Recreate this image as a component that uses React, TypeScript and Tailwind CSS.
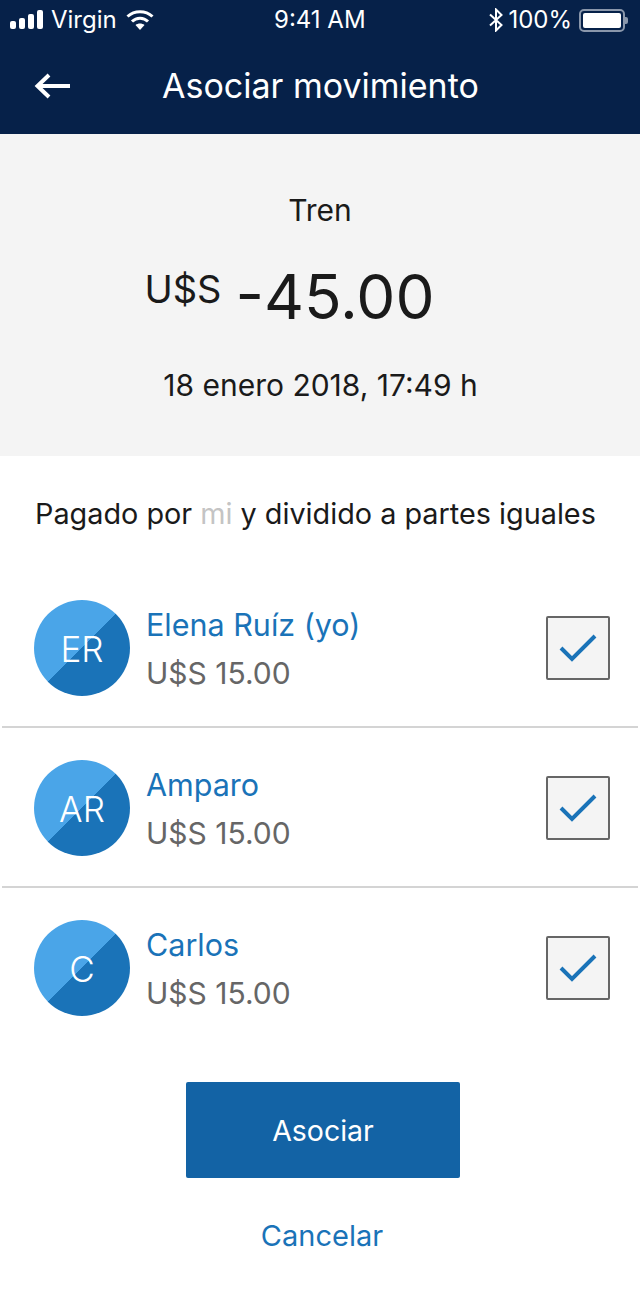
const people = [
  { initials: "ER", name: "Elena Ruíz (yo)" },
  { initials: "AR", name: "Amparo" },
  { initials: "C", name: "Carlos" },
];

function PersonRow({ initials, name, last }: { initials: string; name: string; last: boolean }) {
  return (
    <div className={`mx-[2px] h-[160px] flex items-center pl-[32px] pr-[28px] border-b-2 ${last ? "border-transparent" : "border-[#d4d4d4]"}`}>
      <div className="w-[96px] h-[96px] shrink-0 rounded-full bg-[linear-gradient(135deg,#4aa5e8_50%,#1a73b8_50%)] flex items-center justify-center mt-[2px]">
        <span className="text-white text-[35px] font-light mt-[3px]">{initials}</span>
      </div>
      <div className="ml-[17px] flex-1 flex flex-col mt-[4px]">
        <span className="text-[30.5px] leading-[48px] text-[#1a73b8] ml-[-1px]">{name}</span>
        <span className="text-[30px] leading-[48px] text-[#666666] ml-[-1px]">U$S 15.00</span>
      </div>
      <div className="w-[64px] h-[64px] border-2 border-[#666666] rounded-[2px] bg-[#f4f4f4] flex items-center justify-center mt-[2px]">
        <svg width="38" height="30" viewBox="0 0 38 30" fill="none">
          <path d="M2 15 L13 26 L36 3" stroke="#1a73b8" strokeWidth="4" />
        </svg>
      </div>
    </div>
  );
}

export default function App() {
  return (
    <div className="w-[640px] h-[1292px] bg-white font-['Inter',sans-serif] overflow-hidden">
      <div className="h-[134px] bg-[#062149] text-white flex flex-col">
        <div className="h-[40px] flex items-center pl-[10px] pr-[10px] text-[24px] relative">
          <div className="flex items-end gap-[3px] h-[20px]">
            <div className="w-[6px] h-[8px] bg-white rounded-[2px] mb-[1px]" />
            <div className="w-[6px] h-[11px] bg-white rounded-[2px] mb-[1px]" />
            <div className="w-[6px] h-[15px] bg-white rounded-[2px] mb-[1px]" />
            <div className="w-[6px] h-[19px] bg-white rounded-[2px] mb-[1px]" />
          </div>
          <span className="ml-[8px]">Virgin</span>
          <svg className="ml-[9px]" width="28" height="22" viewBox="0 0 28 22" fill="none" stroke="#fff" strokeWidth="3">
            <path d="M1.5 7.5 C8.5 1 19.5 1 26.5 7.5" />
            <path d="M6 12.5 C10.5 8 17.5 8 22 12.5" />
            <path d="M14 21 L9.5 16 C12 14 16 14 18.5 16 Z" fill="#fff" stroke="none" />
          </svg>
          <span className="absolute left-[274px]">9:41 AM</span>
          <div className="ml-auto flex items-center">
            <svg width="14" height="24" viewBox="0 0 14 24" fill="none" stroke="#fff" strokeWidth="2">
              <path d="M1 6.5 L12.5 17 L7 22.5 V1.5 L12.5 7 L1 17.5" />
            </svg>
            <span className="ml-[5px]">100%</span>
            <div className="ml-[7px] w-[46px] h-[23px] border-2 border-[#8a97ab] rounded-[5px] p-[2px]">
              <div className="w-full h-full bg-white rounded-[2px]" />
            </div>
            <div className="w-[3px] h-[7px] bg-[#8a97ab] rounded-r-[2px] mr-[2px]" />
          </div>
        </div>
        <div className="flex-1 flex items-center pl-[34px] pb-[3px]">
          <svg width="36" height="26" viewBox="0 0 36 26" fill="none" stroke="#fff" strokeWidth="4">
            <path d="M36 13 H4" />
            <path d="M15 2 L3.5 13 L15 24" />
          </svg>
          <span className="ml-[92px] text-[34px]">Asociar movimiento</span>
        </div>
      </div>

      <div className="h-[322px] bg-[#f4f4f4] text-[#1a1a1a] flex flex-col items-center">
        <span className="mt-[56px] text-[30px] leading-[40px]">Tren</span>
        <div className="mt-[28px] h-[78px] flex items-start pr-[61px]">
          <span className="text-[38px] leading-[44px] mt-[9px]">U$S</span>
          <span className="ml-[14px] text-[62px] leading-[78px]">-45.00</span>
        </div>
        <span className="mt-[29px] ml-[1px] text-[30px] leading-[40px]">18 enero 2018, 17:49 h</span>
      </div>

      <p className="mt-[38px] pl-[35px] text-[28.8px] leading-[40px] text-[#1a1a1a]">
        Pagado por <span className="text-[#c4c4c4]">mi</span> y dividido a partes iguales
      </p>

      <div className="mt-[34px]">
        {people.map((p, i) => (
          <PersonRow key={p.name} initials={p.initials} name={p.name} last={i === people.length - 1} />
        ))}
      </div>

      <div className="mt-[-2px] flex flex-col items-center">
        <div className="mt-[36px] ml-[6px] w-[274px] h-[96px] bg-[#1363a5] rounded-[2px] text-white text-[28.5px] flex items-center justify-center">
          <span className="mt-[3px]">Asociar</span>
        </div>
        <span className="mt-[36px] ml-[4px] text-[29px] leading-[44px] text-[#1a73b8]">Cancelar</span>
      </div>
    </div>
  );
}
